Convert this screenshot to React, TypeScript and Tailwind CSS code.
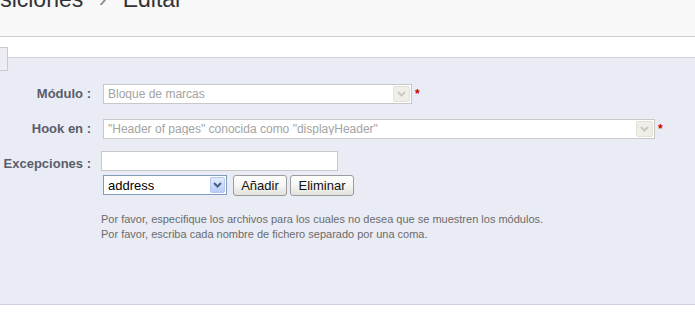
import React from 'react';

const font = { fontFamily: '"Liberation Sans", Arial, sans-serif' };

function Chevron({ color }: { color: string }) {
  return (
    <svg width="9" height="6" viewBox="0 0 9 6">
      <path d="M1 1 L4.5 4.5 L8 1" fill="none" stroke={color} strokeWidth="2" />
    </svg>
  );
}

function FakeSelect({ value, width, disabled }: { value: string; width: string; disabled?: boolean }) {
  return (
    <div
      className={`${width} h-[20px] flex items-center justify-between bg-white border ${disabled ? 'border-[#c8c8c8]' : 'border-[#7f9db9]'} pl-[4px] pr-[1px]`}
    >
      <span className={`${disabled ? 'text-[#a3a3a3] text-[12px]' : 'text-black text-[13px]'} leading-none truncate`}>{value}</span>
      {disabled ? (
        <div className="w-[17px] h-[16px] flex items-center justify-center bg-[#efefe8] border border-[#e2e2da] rounded-[2px]">
          <Chevron color="#c9c9c0" />
        </div>
      ) : (
        <div className="w-[15px] h-[16px] flex items-center justify-center bg-gradient-to-b from-[#e3ecfd] to-[#b7cdf7] border border-[#b5c8f0] rounded-[2px]">
          <Chevron color="#4d6185" />
        </div>
      )}
    </div>
  );
}

function Label({ children }: { children: React.ReactNode }) {
  return <div className="w-[91px] text-right text-[13px] font-bold text-[#5a5c6b] shrink-0">{children}</div>;
}

function Star() {
  return <span className="ml-[3px] text-[12px] font-bold text-[#cc0000] self-start mt-[1px]">*</span>;
}

function XpButton({ children, width }: { children: React.ReactNode; width: string }) {
  return (
    <button className={`${width} h-[21px] text-[13px] text-[#111] leading-none border border-[#9c9c9c] rounded-[3px] bg-gradient-to-b from-[#ffffff] via-[#f5f5f2] to-[#e2e2dc]`}>
      {children}
    </button>
  );
}

export default function App() {
  return (
    <div className="w-[695px] h-[327px] bg-white overflow-hidden" style={font}>
      {/* Page title bar */}
      <div className="h-[37px] bg-[#f8f8f8] border-b border-[#cccccc] overflow-hidden">
        <h2 className="mt-[-12px] ml-[-28px] text-[23px] leading-[22px] font-normal text-[#333333] whitespace-nowrap">
          Posiciones <span className="ml-[9px] mr-[10px] text-[#8a8a8a]">›</span> Editar
        </h2>
      </div>

      <div className="h-[20px]" />

      {/* Fieldset */}
      <div className="relative h-[248px] bg-[#eaecf5] border-t border-b border-[#cfd0dc]">
        <div className="absolute left-0 top-[-11px] w-[8px] h-[24px] bg-[#eceef4] border border-l-0 border-[#c8c9d3]" />

        <div className="pt-[26px]">
          <div className="flex items-center">
            <Label>Módulo :</Label>
            <div className="ml-[12px]">
              <FakeSelect value="Bloque de marcas" width="w-[309px]" disabled />
            </div>
            <Star />
          </div>

          <div className="flex items-center mt-[15px]">
            <Label>Hook en :</Label>
            <div className="ml-[12px]">
              <FakeSelect value={'"Header of pages" conocida como "displayHeader"'} width="w-[552px]" disabled />
            </div>
            <Star />
          </div>

          <div className="flex mt-[12px]">
            <div className="pt-[3px]">
              <Label>Excepciones :</Label>
            </div>
            <div className="ml-[10px]">
              <input className="block w-[237px] h-[20px] bg-white border border-[#c8c8c8] outline-none" />
              <div className="flex items-start gap-[3px] mt-[4px] ml-[2px]">
                <div className="mr-[3px]">
                  <FakeSelect value="address" width="w-[124px]" />
                </div>
                <XpButton width="w-[54px]">Añadir</XpButton>
                <XpButton width="w-[64px]">Eliminar</XpButton>
              </div>
              <div className="mt-[16px] text-[11px] leading-[15px] text-[#6b6b6b]">
                <p>Por favor, especifique los archivos para los cuales no desea que se muestren los módulos.</p>
                <p>Por favor, escriba cada nombre de fichero separado por una coma.</p>
              </div>
            </div>
          </div>
        </div>
      </div>
    </div>
  );
}
